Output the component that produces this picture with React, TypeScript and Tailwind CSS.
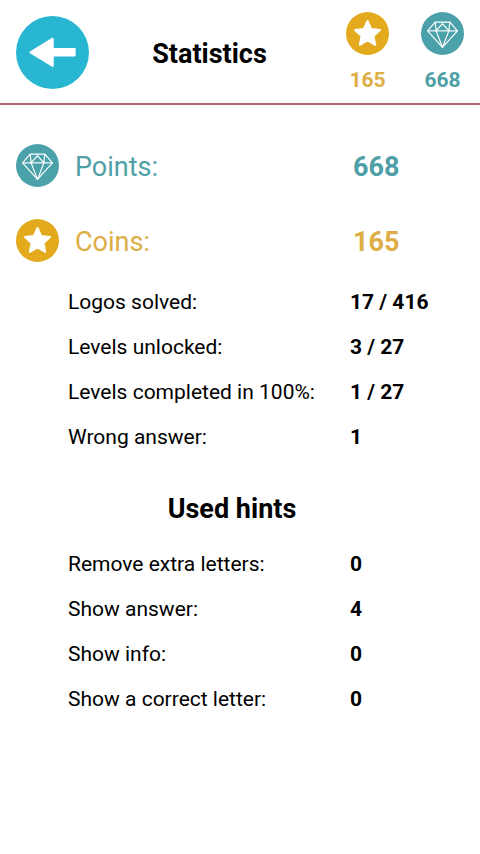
interface IconProps {
  className?: string;
}

function ArrowIcon({ className }: IconProps) {
  return (
    <svg viewBox="0 0 73 73" className={className} aria-hidden="true">
      <circle cx="36.5" cy="36.5" r="36.5" fill="#29b6d3" />
      <path
        d="M14.5 36.3 36.7 22.7v10.3h22v6.5H36.7V50Z"
        fill="#fff"
        stroke="#fff"
        strokeWidth="2"
        strokeLinejoin="round"
      />
    </svg>
  );
}

function CoinIcon({ className }: IconProps) {
  return (
    <svg viewBox="0 0 44 44" className={className} aria-hidden="true">
      <circle cx="22" cy="22" r="22" fill="#e2aa1c" />
      <path
        d="M22 9.2 25.7 17.4 34.8 18.5 28.1 24.6 29.9 33.6 22 29.1 14.1 33.6 15.9 24.6 9.2 18.5 18.3 17.4Z"
        fill="#fff"
        stroke="#fff"
        strokeWidth="2"
        strokeLinejoin="round"
      />
    </svg>
  );
}

function DiamondIcon({ className }: IconProps) {
  return (
    <svg viewBox="0 0 44 44" className={className} aria-hidden="true">
      <circle cx="22" cy="22" r="22" fill="#4aa1a9" />
      <g fill="none" stroke="#fff" strokeWidth="1.2" strokeLinejoin="round">
        <path d="M14.5 10.3H29.5L37.3 19.3 22 36.3 6.7 19.3Z" />
        <path d="M6.7 19.3H37.3" />
        <path d="M14.5 10.3 15.5 19.3 22 11.8 28.5 19.3 29.5 10.3" />
        <path d="M15.5 19.3 22 36.3 28.5 19.3" />
      </g>
    </svg>
  );
}

interface StatRowProps {
  label: string;
  value: string;
}

function StatRow({ label, value }: StatRowProps) {
  return (
    <div className="flex h-[45px] items-center text-[21px]">
      <dt className="w-[282px] shrink-0">{label}</dt>
      <dd className="font-bold">{value}</dd>
    </div>
  );
}

const progress: StatRowProps[] = [
  { label: "Logos solved:", value: "17 / 416" },
  { label: "Levels unlocked:", value: "3 / 27" },
  { label: "Levels completed in 100%:", value: "1 / 27" },
  { label: "Wrong answer:", value: "1" },
];

const hints: StatRowProps[] = [
  { label: "Remove extra letters:", value: "0" },
  { label: "Show answer:", value: "4" },
  { label: "Show info:", value: "0" },
  { label: "Show a correct letter:", value: "0" },
];

export default function App() {
  return (
    <div className="min-h-screen bg-white font-['Roboto',sans-serif] text-black">
      <header className="flex border-b-2 border-[#b06873] pl-4">
        <button type="button" aria-label="Back" className="mt-4 mb-[14px] shrink-0">
          <ArrowIcon className="size-[73px]" />
        </button>
        <h1 className="flex-1 self-center pt-1.5 text-center text-[27px] font-bold">Statistics</h1>
        <div className="flex pt-3 text-[21px] font-bold">
          <div className="flex w-[75px] flex-col items-center gap-2 text-[#dcae45]">
            <CoinIcon className="size-[43px]" />
            <span className="leading-[34px]">165</span>
          </div>
          <div className="flex w-[75px] flex-col items-center gap-2 text-[#4e9fa6]">
            <DiamondIcon className="size-[43px]" />
            <span className="leading-[34px]">668</span>
          </div>
        </div>
      </header>

      <main className="pt-[23px]">
        <dl className="pb-0.5 text-[27px]">
          <div className="flex h-[75px] items-center pl-4 text-[#4e9fa6]">
            <DiamondIcon className="mr-4 size-[43px] shrink-0" />
            <dt className="w-[278px] shrink-0 pt-1">Points:</dt>
            <dd className="pt-1 font-bold">668</dd>
          </div>
          <div className="flex h-[75px] items-center pl-4 text-[#dcae45]">
            <CoinIcon className="mr-4 size-[43px] shrink-0" />
            <dt className="w-[278px] shrink-0 pt-1">Coins:</dt>
            <dd className="pt-1 font-bold">165</dd>
          </div>
        </dl>

        <dl className="pl-[68px]">
          {progress.map((row) => (
            <StatRow key={row.label} label={row.label} value={row.value} />
          ))}
        </dl>

        <h2 className="pt-7 pr-4 pb-3 text-center text-[27px] leading-[42px] font-bold">Used hints</h2>

        <dl className="pl-[68px]">
          {hints.map((row) => (
            <StatRow key={row.label} label={row.label} value={row.value} />
          ))}
        </dl>
      </main>
    </div>
  );
}
